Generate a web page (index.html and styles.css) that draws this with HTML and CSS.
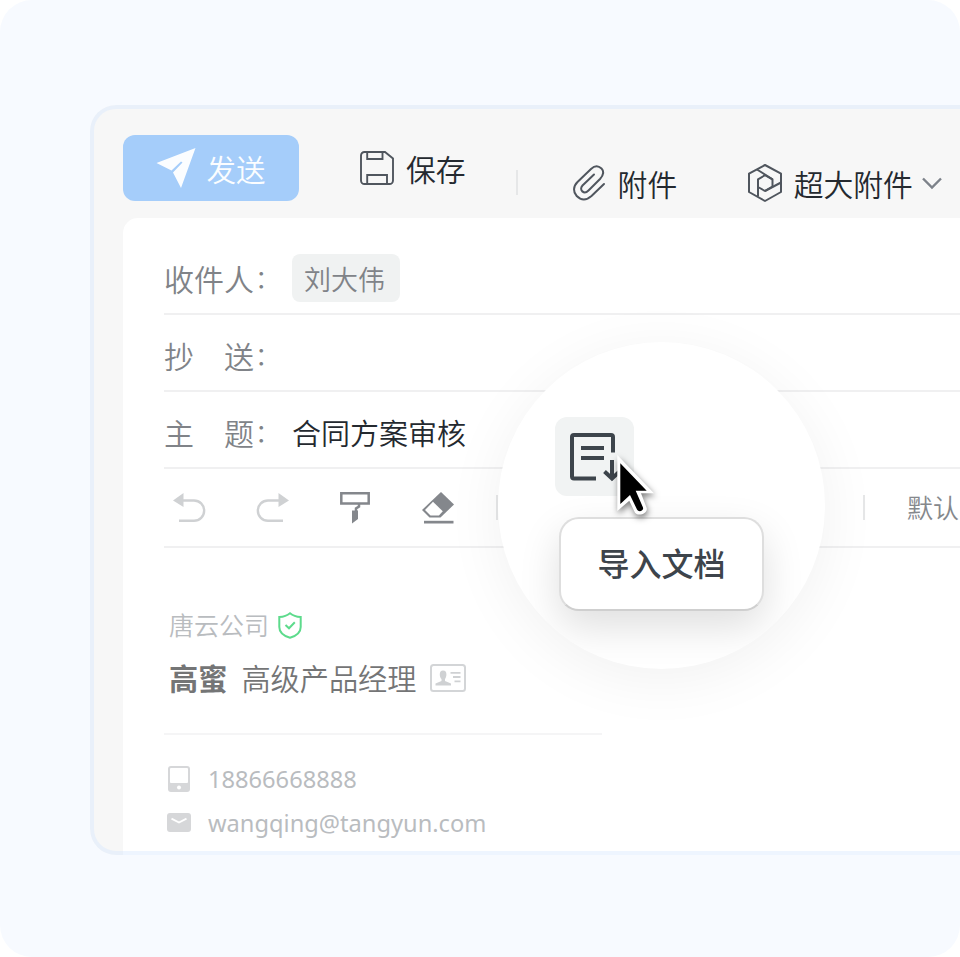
FILE: index.html
```html
<!DOCTYPE html>
<html lang="zh-CN">
<head>
    <meta charset="UTF-8">
    <meta name="viewport" content="width=device-width, initial-scale=1.0">
    <title>写邮件</title>
    <link rel="stylesheet" href="styles.css">
</head>
<body>
    <div class="page">
        <div class="window">
            <!-- toolbar -->
            <div class="toolbar">
                <button class="send">
                    <svg width="40" height="42" viewBox="0 0 40 42"><path d="M0.5 16 39.5 1 25 41 17 25.5 26.5 15.5 25 14.6 15.5 23.5Z" fill="#fbfdff"/></svg>
                    <span>发送</span>
                </button>
                <div class="tool save">
                    <svg width="34" height="34" viewBox="0 0 34 34" fill="none" stroke="#50565e" stroke-width="1.9"><path d="M4.5 1H25l8 6.500V29.500A3.500 3.500 0 0 1 29.500 33H4.500A3.500 3.500 0 0 1 1 29.500V4.500A3.500 3.500 0 0 1 4.500 1Z"/><path d="M7.200 1V8H22.500V1M7.200 33V24H27V33"/></svg>
                    <span>保存</span>
                </div>
                <i class="sep"></i>
                <div class="tool attach">
                    <svg width="34" height="36" viewBox="0 0 34 36" fill="none" stroke="#50565e" stroke-width="2" stroke-linecap="round"><path d="M21 9.500 9.500 20.500C5.500 25 11 30 15.500 25.500L27 14C31 9.500 31 6 28.500 3.500C25.500.7 21.500.7 18 4L4.500 17C0 21.500 0 27 3.700 31C8 35.500 13.500 35.500 18.500 31L31 19"/></svg>
                    <span>附件</span>
                </div>
                <div class="tool big-attach">
                    <svg width="34" height="38" viewBox="0 0 34 38" fill="none" stroke="#50565e" stroke-width="2" stroke-linejoin="round"><path d="M17 1 33 9.700V28L17 37 1 28V9.700Z"/><path d="M17 11.200 24.500 15.300V22.500L17 27 10 23V15.300Z"/><path d="M9 5.500 24.500 15.300M10 15.300V32.500M33 18.500 17 27"/></svg>
                    <span>超大附件</span>
                    <svg class="arrow" width="20" height="13" viewBox="0 0 20 13" fill="none" stroke="#7d828a" stroke-width="2.400"><path d="M1 1.500 10 10.500 19 1.500"/></svg>
                </div>
            </div>

            <div class="sheet">
                <div class="row">
                    <span class="label">收件人<i>：</i></span>
                    <span class="chip">刘大伟</span>
                </div>
                <div class="row">
                    <span class="label">抄　送<i>：</i></span>
                </div>
                <div class="row">
                    <span class="label">主　题<i>：</i></span>
                    <span class="subject">合同方案审核</span>
                </div>
                <div class="row editbar">
                    <svg class="undo" width="33" height="30" viewBox="0 0 33 30"><path d="M0 7.500 10.500 0V14Z" fill="#cfd1d3"/><path d="M9 7.500H21A9.900 9.900 0 0 1 21 27.800H6" fill="none" stroke="#cfd1d3" stroke-width="2.400"/></svg>
                    <svg class="redo" width="33" height="30" viewBox="0 0 33 30"><path d="M33 7.500 22.500 0V14Z" fill="#cfd1d3"/><path d="M24 7.500H12A9.900 9.900 0 0 0 12 27.800H27" fill="none" stroke="#cfd1d3" stroke-width="2.400"/></svg>
                    <svg class="brush" width="30" height="32" viewBox="0 0 30 32"><path d="M1.300 1.300H28.700V11.500H1.300Z" fill="none" stroke="#84878c" stroke-width="2.500"/><path d="M19 12V14.500L16 16.500V19" fill="none" stroke="#84878c" stroke-width="2.500"/><path d="M12 18.500H18V27L12 31.500Z" fill="#84878c"/></svg>
                    <svg class="eraser" width="32" height="32" viewBox="0 0 32 32"><path d="M19 0 32 12.500 18.500 25.500H7.500L0 18Z" fill="#84878c"/><path d="M11 9.800 20.800 19.300 16.900 23.400H8.500L3 18Z" fill="#fff"/><path d="M2 28.800H31.500V31.500H2Z" fill="#84878c"/></svg>
                    <i class="sep sep-left"></i>
                    <i class="sep sep-right"></i>
                    <span class="font-name">默认</span>
                </div>

                <!-- signature -->
                <div class="sign">
                    <div class="company">
                        <span>唐云公司</span>
                        <svg width="24" height="27" viewBox="0 0 24 27" fill="none" stroke="#5ddb8c" stroke-width="2"><path d="M12 1.200C15 3.700 19 4.800 22.700 5V15C22.700 20.500 18 24 12 25.800C6 24 1.300 20.500 1.300 15V5C5 4.800 9 3.700 12 1.200Z"/><path d="M7.500 13 11 16.300 16.800 10.300"/></svg>
                    </div>
                    <div class="person">
                        <b>高蜜</b>
                        <span>高级产品经理</span>
                        <svg width="36" height="28" viewBox="0 0 36 28"><rect x="1" y="1" width="34" height="26" rx="2.500" fill="none" stroke="#d3d5d7" stroke-width="2"/><path d="M13 6.500C18 6.500 16.500 13.500 15 15V17L21 19.500V21.500H5.500V19.500L11.500 17V15C9.500 13.500 8.500 6.500 13 6.500Z" fill="#cfd1d3"/><path d="M20.500 8.800H30.500M23 13H30.500M24.500 17.300H30.500" stroke="#cfd1d3" stroke-width="1.800"/></svg>
                    </div>
                    <div class="contact phone">
                        <svg width="22" height="26" viewBox="0 0 22 26"><rect width="22" height="26" rx="3" fill="#d6d7d9"/><rect x="2" y="2" width="18" height="15" rx="1" fill="#fff"/><circle cx="11" cy="21.500" r="2" fill="#fff"/></svg>
                        <span>18866668888</span>
                    </div>
                    <div class="contact mail">
                        <svg width="24" height="19" viewBox="0 0 24 19"><rect width="24" height="19" rx="3" fill="#d6d7d9"/><path d="M4.500 5.700 12 9.500 19.500 5.700" fill="none" stroke="#fff" stroke-width="1.900"/></svg>
                        <span>wangqing@tangyun.com</span>
                    </div>
                </div>
            </div>
        </div>

        <!-- magnified import button -->
        <div class="lens">
            <div class="import">
                <svg width="48" height="50" viewBox="0 0 48 50" fill="none" stroke="#3d444b" stroke-width="4"><path d="M27 46.500H5A2 2 0 0 1 3 44.500V5A2 2 0 0 1 5 3H42A2 2 0 0 1 44 5V20.500M12 16H35M12 26H35"/><path d="M43 28V47M35.500 39.500 43 46.500 50 40"/></svg>
            </div>
            <div class="tooltip">导入文档</div>
            <svg class="cursor" width="48" height="66" viewBox="0 0 48 66"><path d="M6.300 3V59L18.300 48.700 24 60.700C27.500 65 37 61.500 35.700 56L30 41.300H43Z" fill="#fff"/><path d="M9.300 11.300V52L19 43 26 57.500C28 61 33 58.500 32 55.500L24.700 38.700H35.700Z" fill="#000"/></svg>
        </div>
    </div>
</body>
</html>
```
FILE: styles.css
```css
* {
    box-sizing: border-box;
}
body {
    margin: 0;
    background: #fff;
    font-family: "Noto Sans CJK SC", sans-serif;
    font-size: 30px;
    font-weight: 350;
    line-height: 40px;
    color: #24292f;
}
svg {
    display: block;
    flex: none;
    overflow: visible;
}
.page {
    position: relative;
    width: 960px;
    height: 957px;
    padding: 105px 0 0 90px;
    background: #f7faff;
    border-radius: 32px;
    overflow: hidden;
}
.window {
    position: relative;
    width: 920px;
    height: 750px;
    padding-left: 32.5px;
    background: #f7f7f7;
    border-radius: 26px;
    overflow: hidden;
}
/* translucent frame over the window content */
.window::after {
    content: "";
    position: absolute;
    inset: 0;
    border: 4.5px solid rgba(212, 231, 255, 0.4);
    border-radius: 26px;
}

/* toolbar */
.toolbar {
    display: flex;
    align-items: flex-start;
    height: 113px;
    padding-top: 30px;
    white-space: nowrap;
}
.send {
    display: flex;
    align-items: center;
    width: 176.5px;
    height: 66px;
    padding: 0 0 0 33px;
    gap: 11px;
    border: 0;
    border-radius: 12px;
    background: #a5cdfa;
    color: #fbfdff;
    font: 350 29.5px/40px "Noto Sans CJK SC", sans-serif;
}
.tool {
    display: flex;
    align-items: center;
    font-size: 29.8px;
    height: 66px;
}
.save {
    margin-left: 60.5px;
    gap: 12.5px;
}
.sep {
    width: 2px;
    height: 25px;
    background: #e6e7e8;
}
.toolbar .sep {
    margin: 35px 0 0 50px;
}
.attach {
    margin: 15px 0 0 55px;
    gap: 11px;
}
.big-attach {
    margin: 15px 0 0 70.5px;
    gap: 12px;
}
.big-attach .arrow {
    margin-left: -3px;
}

/* mail form */
.sheet {
    height: 637px;
    padding: 20px 0 0 41.5px;
    background: #fff;
    border-top-left-radius: 15px;
}
.row {
    display: flex;
    align-items: center;
    height: 77px;
    padding-top: 5px;
    border-bottom: 2px solid #f0f0f1;
}
.label {
    width: 128px;
    margin-top: 2px;
    color: #808388;
    white-space: nowrap;
}
.label i {
    position: relative;
    top: -3px;
    left: 1px;
    font-size: 25px;
    font-style: normal;
}
.chip {
    width: 108px;
    height: 48px;
    padding-left: 12px;
    border-radius: 8px;
    background: #f0f2f2;
    color: #808388;
    font-size: 27px;
    line-height: 49px;
}
.subject {
    font-size: 29px;
}
.editbar {
    height: 79px;
    padding-top: 0;
    font-size: 26px;
}
.undo {
    margin-left: 9px;
}
.redo {
    margin-left: 50px;
}
.brush {
    margin-left: 51px;
}
.eraser {
    margin-left: 52px;
}
.sep-left {
    margin-left: 42px;
}
.sep-right {
    margin-left: 365px;
}
.font-name {
    margin: -2px 0 0 42px;
    color: #85888c;
    white-space: nowrap;
}

/* signature */
.sign {
    padding: 58px 0 0 5px;
}
.company,
.person,
.contact {
    display: flex;
    align-items: center;
}
.company {
    gap: 8.5px;
    color: #b9bcbf;
    font-size: 25px;
}
.company span {
    margin-top: -2px;
}
.person {
    position: relative;
    height: 68px;
    color: #747576;
    font-size: 29.2px;
}
.person b,
.person span {
    margin-top: -2px;
}
.person b {
    margin-right: 14px;
}
.person svg {
    margin-left: 13px;
}
.person::after {
    content: "";
    position: absolute;
    left: -5px;
    bottom: -23px;
    width: 438px;
    height: 2px;
    background: #f5f5f6;
}
.contact {
    height: 43px;
    color: #b9bcbf;
    font-family: "Noto Sans", sans-serif;
    font-size: 23.65px;
    font-weight: 400;
}
.phone {
    margin: 45px 0 0 -1px;
}
.phone span {
    margin-left: 18px;
}
.mail {
    margin: 1px 0 0 -2px;
}
.mail span {
    margin-left: 17px;
}

/* lens */
.lens {
    position: absolute;
    left: 498px;
    top: 342px;
    width: 327px;
    height: 327px;
    border-radius: 50%;
    background: #fff;
    box-shadow: 0 10px 60px rgba(0, 0, 0, 0.06);
    padding: 75px 0 0 57px;
    overflow: hidden;
}
.import {
    width: 79px;
    height: 79px;
    padding: 15px 0 0 14px;
    border-radius: 12px;
    background: #f1f3f3;
}
.tooltip {
    width: 205px;
    height: 94px;
    margin: 21px 0 0 4px;
    border: 2px solid #dedede;
    border-bottom-color: #cfcfcf;
    border-radius: 20px;
    background: #fff;
    box-shadow: 0 16px 40px rgba(0, 0, 0, 0.13);
    color: #3d444b;
    font-size: 32px;
    font-weight: 500;
    line-height: 86px;
    text-align: center;
}
.cursor {
    position: absolute;
    left: 113px;
    top: 110px;
    filter: drop-shadow(1px 3px 3px rgba(0, 0, 0, 0.5));
}
```
